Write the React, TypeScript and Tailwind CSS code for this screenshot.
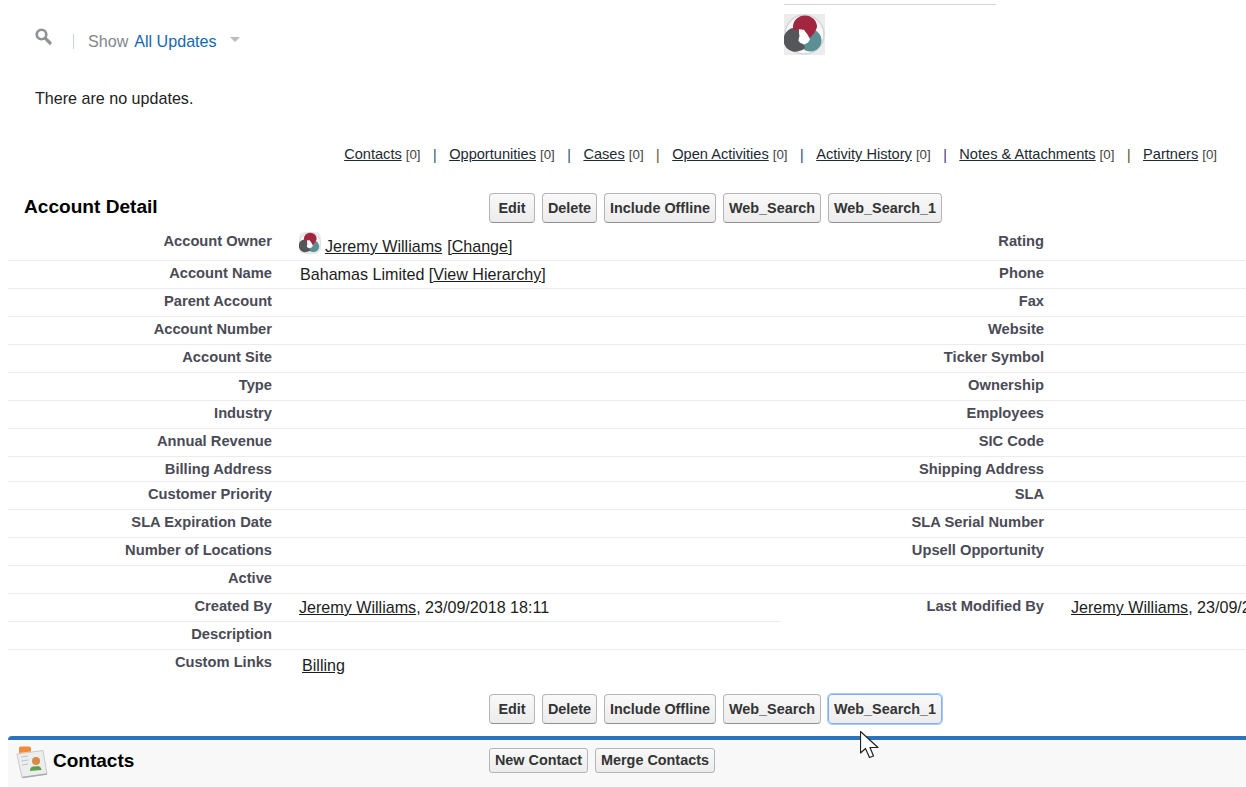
import React from 'react';

const font = "[font-family:'Liberation_Sans',Arial,sans-serif]";

const links = ['Contacts', 'Opportunities', 'Cases', 'Open Activities', 'Activity History', 'Notes & Attachments', 'Partners'];
const sepColors = ['text-[#1f4f6b]', 'text-[#1f4f6b]', 'text-[#6a4a1f]', 'text-[#1f3f6b]', 'text-[#3f2f7b]', 'text-[#5a4a1f]'];

const rows: { left: string; right: string; h: string }[] = [
  { left: 'Account Name', right: 'Phone', h: 'h-[28px]' },
  { left: 'Parent Account', right: 'Fax', h: 'h-[28px]' },
  { left: 'Account Number', right: 'Website', h: 'h-[28px]' },
  { left: 'Account Site', right: 'Ticker Symbol', h: 'h-[28px]' },
  { left: 'Type', right: 'Ownership', h: 'h-[28px]' },
  { left: 'Industry', right: 'Employees', h: 'h-[28px]' },
  { left: 'Annual Revenue', right: 'SIC Code', h: 'h-[28px]' },
  { left: 'Billing Address', right: 'Shipping Address', h: 'h-[25px]' },
  { left: 'Customer Priority', right: 'SLA', h: 'h-[28px]' },
  { left: 'SLA Expiration Date', right: 'SLA Serial Number', h: 'h-[28px]' },
  { left: 'Number of Locations', right: 'Upsell Opportunity', h: 'h-[28px]' },
];

function Venn({ size }: { size: number }) {
  return (
    <svg width={size} height={size} viewBox="0 0 41 41" className="block">
      <defs>
        <filter id="soft"><feGaussianBlur stdDeviation="0.7" /></filter>
      </defs>
      <rect width="41" height="41" fill="#ececec" />
      <circle cx="20.5" cy="20.5" r="19.5" fill="#f7f8f8" stroke="#d3d7d7" strokeWidth="1.5" />
      <g filter="url(#soft)">
        <circle cx="26.5" cy="26.5" r="11" fill="#5a9093" />
        <path d="M15 14.5A11.5 12 0 1 0 15 37Q18 37 21 34L15 20Z" fill="#55575a" />
        <path d="M9 13A12 11.5 0 0 1 33 13Q32 18 25 25L20 16Q14 14 9 17Z" fill="#a3283f" />
        <path d="M19.5 15.5Q23 19 26 25Q25 29 20 30.5Q16 29.5 14.5 27Q15 20 19.5 15.5Z" fill="#ffffff" />
      </g>
    </svg>
  );
}

function Btn({ label, w, focused }: { label: string; w: string; focused?: boolean }) {
  return (
    <button
      className={`h-[30px] pt-[2px] ${w} rounded-[4px] border bg-gradient-to-b from-[#f9f9f9] to-[#ececec] text-[14.4px] font-bold text-[#333435] whitespace-nowrap ${
        focused ? 'border-[#7fb0f5] shadow-[0_0_0_1px_#a9c9f7]' : 'border-[#b5b5b5] border-b-[#8f8f8f]'
      }`}
    >
      {label}
    </button>
  );
}

function ButtonRow({ focusLast }: { focusLast?: boolean }) {
  return (
    <div className="flex gap-[7px]">
      <Btn label="Edit" w="w-[46px]" />
      <Btn label="Delete" w="w-[55px]" />
      <Btn label="Include Offline" w="w-[112px]" />
      <Btn label="Web_Search" w="w-[98px]" />
      <Btn label="Web_Search_1" w="w-[114px]" focused={focusLast} />
    </div>
  );
}

function Label({ children, className = '' }: { children?: React.ReactNode; className?: string }) {
  return <div className={`shrink-0 text-right text-[14.7px] font-bold text-[#4a4a56] leading-[16px] ${className}`}>{children}</div>;
}

export default function App() {
  return (
    <div className={`relative h-[787px] w-[1246px] overflow-hidden bg-white text-[16.1px] text-[#1c1c1c] ${font}`}>
      {/* Feed header */}
      <div className="flex h-[142px]">
        <div className="w-[784px] pl-[35px] pt-[31px]">
          <div className="flex items-center h-[20px]">
            <svg width="17" height="17" viewBox="0 0 17 17" className="-mt-[10px]">
              <circle cx="6.5" cy="6.5" r="4.8" fill="none" stroke="#8f9396" strokeWidth="2.6" />
              <path d="M10.2 10.2L15 15" stroke="#8f9396" strokeWidth="3.2" strokeLinecap="round" />
            </svg>
            <span className="ml-[21px] h-[15px] w-px bg-[#c9d3dc]" />
            <span className="ml-[14px] text-[#83878c]">Show</span>
            <span className="ml-[6px] text-[#1468b2]">All Updates</span>
            <span className="ml-[13px] -mt-[3px] border-x-[5px] border-t-[5px] border-x-transparent border-t-[#bcbcbc]" />
          </div>
          <div className="mt-[37px] leading-[20px] text-[#222]">There are no updates.</div>
        </div>
        <div className="w-[212px] pt-[4px]">
          <div className="h-px bg-[#d4d7da]" />
          <div className="mt-[9px]">
            <Venn size={41} />
          </div>
        </div>
      </div>

      {/* Related list links */}
      <div className="flex justify-end pr-[29px] pt-[2px] h-[24px] items-center text-[14.6px] text-[#333]">
        {links.map((l, i) => (
          <React.Fragment key={l}>
            <a className="underline text-[#1c2a35]">{l}</a>
            <span className="ml-[4px] text-[13.3px] text-[#444]">[0]</span>
            {i < links.length - 1 && <span className={`mx-[12.5px] text-[14px] ${sepColors[i]}`}>|</span>}
          </React.Fragment>
        ))}
      </div>

      {/* Title + buttons */}
      <div className="flex h-[30px] mt-[27px] items-center">
        <div className="w-[489px] pl-[24px] pb-[2px] text-[19.1px] font-bold text-black">Account Detail</div>
        <ButtonRow />
      </div>

      {/* Detail rows */}
      <div className="ml-[8px] mt-[9px]">
        <div className="flex h-[29px] border-b border-[#ececec]">
          <Label className="w-[264px] pt-[1px]">Account Owner</Label>
          <div className="w-[473px] shrink-0 pl-[27px] flex items-start">
            <span className="block h-[22px] w-[22px] shrink-0 rounded-[6px] overflow-hidden"><Venn size={22} /></span>
            <a className="ml-[4px] mt-[2px] underline">Jeremy Williams</a>
            <span className="ml-[5px] mt-[2px]">[<a className="underline">Change</a>]</span>
          </div>
          <Label className="w-[299px] pt-[1px]">Rating</Label>
        </div>
        {rows.map((r, i) => (
          <div key={r.left} className={`flex ${r.h} border-b border-[#ececec]`}>
            <Label className="w-[264px] pt-[4px]">{r.left}</Label>
            <div className="w-[473px] shrink-0 pl-[28px] pt-[1px]">
              {i === 0 && (
                <span>
                  Bahamas Limited [<a className="underline">View Hierarchy</a>]
                </span>
              )}
            </div>
            <Label className="w-[299px] pt-[4px]">{r.right}</Label>
          </div>
        ))}
        <div className="flex h-[28px] border-b border-[#ececec]">
          <Label className="w-[264px] pt-[4px]">Active</Label>
        </div>
        <div className="flex h-[28px]">
          <div className="flex w-[773px] shrink-0 border-b border-[#ececec]">
            <Label className="w-[264px] pt-[4px]">Created By</Label>
            <div className="pl-[27px] pt-[1px] whitespace-nowrap">
              <a className="underline">Jeremy Williams</a>, 23/09/2018 18:11
            </div>
          </div>
          <Label className="w-[263px] pt-[4px]">Last Modified By</Label>
          <div className="pl-[27px] pt-[1px] whitespace-nowrap">
            <a className="underline">Jeremy Williams</a>, 23/09/2018 18:11
          </div>
        </div>
        <div className="flex h-[28px] border-b border-[#ececec]">
          <div className="w-[773px]">
            <Label className="w-[264px] pt-[4px]">Description</Label>
          </div>
        </div>
        <div className="flex h-[28px]">
          <Label className="w-[264px] pt-[4px]">Custom Links</Label>
          <a className="ml-[30px] mt-[3px] underline">Billing</a>
        </div>
      </div>

      {/* Bottom buttons */}
      <div className="pl-[489px] mt-[16px]">
        <ButtonRow focusLast />
      </div>

      {/* Contacts related list */}
      <div className="ml-[8px] mt-[12px] h-[60px] rounded-tl-[4px] border-t-[4px] border-[#2a73bf] bg-[#f8f8f8] flex">
        <div className="w-[481px] flex items-start pl-[8px] pt-[3px]">
          <svg width="32" height="36" viewBox="0 0 32 36" className="shrink-0">
            <path d="M1 11L27 7.5L31 31L6 34.5Q3 22 1 11Z" fill="#eceded" stroke="#c9cbcb" strokeWidth="1" />
            <path d="M6.5 34.5L31 31" stroke="#a9abab" strokeWidth="1.4" />
            <path d="M3 10V5Q3 3.5 4.5 3.5H13Q15 3.5 15 5V8.5Z" fill="#f08a3c" />
            <path d="M5 14l7-1M5.5 18l7-1M6 22l6-1" stroke="#bfc3c3" strokeWidth="1" />
            <circle cx="20" cy="18" r="4" fill="#d98a4a" />
            <path d="M14 28Q14 23 18 23.5L22 23Q25 23.5 25.5 27Z" fill="#5f9e4a" />
          </svg>
          <span className="ml-[5px] mt-[4px] text-[19px] font-bold text-black">Contacts</span>
        </div>
        <div className="flex gap-[7px] pt-[8px]">
          <button className="h-[25px] w-[99px] rounded-[3px] border border-[#b5b5b5] bg-gradient-to-b from-[#f9f9f9] to-[#ececec] text-[14.4px] font-bold text-[#333435]">New Contact</button>
          <button className="h-[25px] w-[120px] rounded-[3px] border border-[#b5b5b5] bg-gradient-to-b from-[#f9f9f9] to-[#ececec] text-[14.4px] font-bold text-[#333435]">Merge Contacts</button>
        </div>
      </div>

      {/* Mouse pointer */}
      <svg width="20" height="28" viewBox="0 0 20 28" className="absolute left-[860px] top-[731px]">
        <path d="M0.5 0.5V22L5.5 17.5L9.5 26.5L13.5 25L10 16.5H18Z" fill="#fff" stroke="#222" strokeWidth="1.2" strokeLinejoin="round" />
      </svg>
    </div>
  );
}
